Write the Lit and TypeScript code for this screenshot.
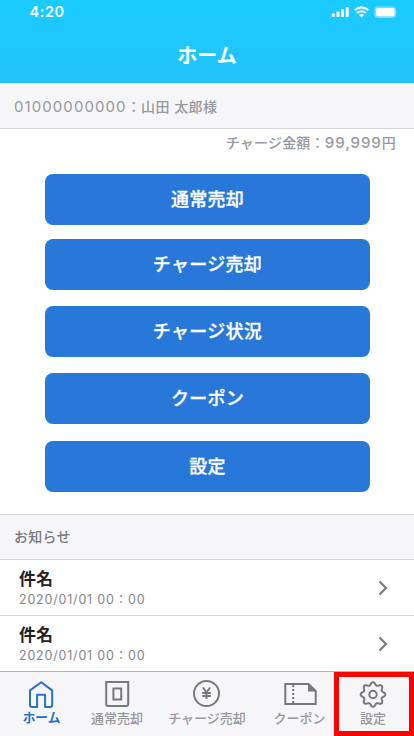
import { LitElement, html, css, svg } from "lit";
import { customElement, property } from "lit/decorators.js";

// Eight-toothed cog outline around (14, 14.5), as a closed wave.
const cog =
  "M" +
  Array.from({ length: 128 }, (_, i) => {
    const t = (i / 128) * Math.PI * 2;
    const r = 10.900 + 1.450 * Math.cos(8 * t);
    return `${(14 + r * Math.cos(t)).toFixed(2)} ${(14.5 + r * Math.sin(t)).toFixed(2)}`;
  }).join("L") +
  "Z";

const tabIcons: Record<string, unknown> = {
  home: svg`<path d="M13.200 2.200 2 10.400V25q0 2 2 2H9.100V14.800h8V27h5.100q2 0 2-2V10.400Z" stroke-linejoin="round"/>`,
  sell: svg`<path d="M3.200 2h22v22q0 2-2 2H5.200q-2 0-2-2Z"/><path d="M10.400 8.500h7.800v11h-7.800Z"/>`,
  charge: svg`<circle cx="13.500" cy="13.500" r="12.500"/><path d="m10 7.500 3.500 5L17 7.500M13.500 12.500V19M9.200 13h8.600M9.200 16h8.600" stroke-width="1.900"/>`,
  coupon: svg`<path d="M-.7 4H22.500l7.200 7v13H-.7Z"/><path d="M22 3.500V11.500h8Z" fill="currentColor" stroke="none"/><path d="M7.200 5v18.500" stroke-dasharray="2 2"/>`,
  gear: svg`<path d="${cog}" stroke-linejoin="round"/><circle cx="14" cy="14.500" r="3.700"/>`,
};

@customElement("tab-item")
class TabItem extends LitElement {
  @property() icon = "home";
  @property() label = "";
  static styles = css`
    :host { display: flex; flex-direction: column; align-items: center; color: #77777f; }
    svg { display: block; width: 28px; height: 28px; margin-top: 8px; overflow: visible; fill: none; stroke: currentColor; stroke-width: 2; }
    .label { margin-top: 1px; height: 18px; line-height: 18px; font-size: 13px; font-weight: 500; color: #96969c; white-space: nowrap; }
    :host([active]) { color: #2870cc; }
    :host([active]) .label { color: #2870cc; font-weight: 700; font-size: 12.700px; }
  `;
  render() {
    return html`<svg viewBox="0 0 28 28">${tabIcons[this.icon]}</svg><span class="label">${this.label}</span>`;
  }
}

@customElement("news-row")
class NewsRow extends LitElement {
  @property() subject = "";
  @property() date = "";
  static styles = css`
    :host { display: flex; align-items: center; justify-content: space-between; box-sizing: border-box; height: 55px; padding: 0 26px 0 19px; background: #fff; }
    .subject { height: 22px; line-height: 22px; font-size: 17px; font-weight: 700; color: #222226; margin-top: 1px; }
    .date { height: 18px; line-height: 18px; font-size: 12.500px; font-weight: 400; letter-spacing: .8px; color: #85858c; margin-top: 1px; white-space: pre; }
    svg { width: 10px; height: 16px; fill: none; stroke: #7b7b84; stroke-width: 2.300; margin-top: 1px; }
  `;
  render() {
    return html`<div><div class="subject">${this.subject}</div><div class="date">${this.date}</div></div>
      <svg viewBox="0 0 10 16"><path d="M1.500 1.500 8 8l-6.500 6.500"/></svg>`;
  }
}

@customElement("app-root")
class AppRoot extends LitElement {
  static styles = css`
    :host { display: flex; flex-direction: column; width: 414px; height: 736px; overflow: hidden; background: #fff; font-family: Inter, "Noto Sans CJK JP", sans-serif; }
    .top { height: 83px; background: linear-gradient(#1acbff, #22c3fb); color: #fff; }
    .status { display: flex; align-items: center; justify-content: space-between; height: 24px; padding: 0 16px 0 29.500px; }
    .clock { font-size: 14.500px; font-weight: 600; letter-spacing: .6px; padding-bottom: 2px; }
    .signals { width: 67px; height: 12px; fill: #fff; }
    .title { height: 60px; line-height: 62px; padding-top: 1px; box-sizing: border-box; text-align: center; font-size: 20px; font-weight: 700; }
    .band { display: flex; align-items: center; box-sizing: border-box; height: 46px; padding-left: 14px; border-bottom: 1px solid #d6d6dc; background: #f6f6f9; font-size: 14px; white-space: pre; }
    .user { color: #98989e; font-weight: 500; letter-spacing: .45px; align-items: baseline; line-height: 48px; }
    .num { letter-spacing: .95px; font-size: 15px; }
    .user .num { font-weight: 400; letter-spacing: 1.080px; }
    .news { border-top: 1px solid #d6d6dc; padding-bottom: 3px; color: #7a7a82; font-weight: 500; letter-spacing: .25px; }
    .amount { height: 28px; line-height: 28px; padding-right: 18px; text-align: right; font-size: 14px; font-weight: 500; letter-spacing: .22px; color: #98989f; }
    .menu { display: grid; grid-template-rows: repeat(5, 51px); row-gap: 16px; box-sizing: border-box; height: 357px; padding: 15px 44px 0 45px; }
    .menu button { box-sizing: border-box; border: 0; padding: 1px 0 0; border-radius: 8px; background: #2878da; color: #fff; font: 500 18px/50px Inter, "Noto Sans CJK JP", sans-serif; letter-spacing: .3px; -webkit-text-stroke: .3px #fff; }
    .menu button:first-child { margin: 2px 0 -2px; }
    .menu button:last-child { margin: 1px 0 -1px; }
    news-row + news-row { border-top: 1px solid #d6d6da; height: 56px; }
    .tabs { display: grid; grid-template-columns: 83px 68px 112px 71px 80px; height: 64px; border-top: 1px solid #b1b1b6; background: #f6f6f9; }
    .framed { box-sizing: border-box; border: 5px solid #f00; }
    .framed tab-item { margin-top: -5px; margin-right: 2px; }
    .coupon { padding-left: 2px; }
  `;
  render() {
    return html`
      <header class="top">
        <div class="status">
          <span class="clock">4:20</span>
          <svg class="signals" viewBox="0 0 67 12">
            <rect x="0.800" y="7.500" width="3" height="3.500" rx=".8"/><rect x="5.500" y="5.500" width="3" height="5.500" rx=".8"/><rect x="10" y="3" width="3" height="8" rx=".8"/><rect x="14.700" y="1" width="3" height="10" rx=".8"/>
            <g fill="none" stroke="#fff" stroke-width="2"><path d="M23.600 4.300q6.900-5.900 13.800 0M26.100 7.100q4.400-3.800 8.800 0"/></g><path d="M28 8.900q2.500-1.900 5 0L30.500 11.400Z"/>
            <rect x="43.500" y=".4" width="21.500" height="11.500" rx="2.800" opacity=".4"/><rect x="45" y="2" width="18.500" height="8.300" rx="1.500"/><path d="M65.500 4.500q1.500 1.500 0 3.500Z" opacity=".5"/>
          </svg>
        </div>
        <div class="title">ホーム</div>
      </header>
      <div class="band user"><span class="num">01000000000</span>：山田 太郎様</div>
      <div class="amount">チャージ金額：<span class="num">99,999</span>円</div>
      <nav class="menu">
        ${["通常売却", "チャージ売却", "チャージ状況", "クーポン", "設定"].map((t) => html`<button>${t}</button>`)}
      </nav>
      <div class="band news">お知らせ</div>
      <news-row subject="件名" date="2020/01/01 00：00"></news-row>
      <news-row subject="件名" date="2020/01/01 00：00"></news-row>
      <nav class="tabs">
        <tab-item active icon="home" label="ホーム"></tab-item>
        <tab-item icon="sell" label="通常売却"></tab-item>
        <tab-item icon="charge" label="チャージ売却"></tab-item>
        <tab-item class="coupon" icon="coupon" label="クーポン"></tab-item>
        <div class="framed"><tab-item icon="gear" label="設定"></tab-item></div>
      </nav>`;
  }
}
